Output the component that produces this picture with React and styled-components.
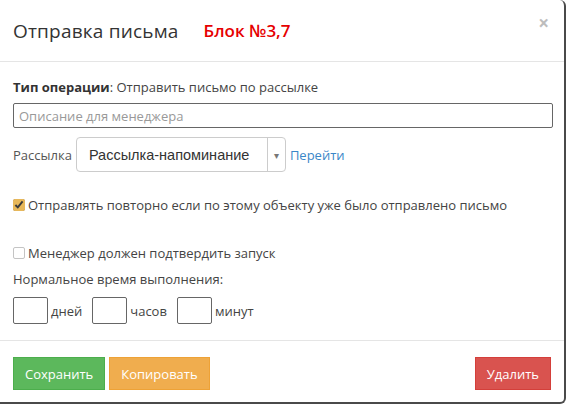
import React, { useState } from 'react'
import styled, { createGlobalStyle } from 'styled-components'

const Global = createGlobalStyle`
  body {
    margin: 0;
    background: #fff;
    font-family: "Open Sans", "Liberation Sans", sans-serif;
    color: #333;
  }
`

const App = () => {
  const [repeat, setRepeat] = useState(true)
  const [confirm, setConfirm] = useState(false)

  return (
    <>
      <Global />
      <Modal>
        <Header>
          <Title>Отправка письма</Title>
          <Block>Блок №3,7</Block>
          <Close>×</Close>
        </Header>
        <Body>
          <Line>
            <b>Тип операции</b>: Отправить письмо по рассылке
          </Line>
          <TextInput placeholder="Описание для менеджера" />
          <SelectRow>
            <span>Рассылка</span>
            <Select>
              <SelectValue>Рассылка-напоминание</SelectValue>
              <SelectArrow>▾</SelectArrow>
            </Select>
            <Link>Перейти</Link>
          </SelectRow>
          <Check top="24px">
            <input type="checkbox" checked={repeat} onChange={() => setRepeat(!repeat)} />
            Отправлять повторно если по этому объекту уже было отправлено письмо
          </Check>
          <Check top="30px">
            <input type="checkbox" checked={confirm} onChange={() => setConfirm(!confirm)} />
            Менеджер должен подтвердить запуск
          </Check>
          <Line top="8px">Нормальное время выполнения:</Line>
          <TimeRow>
            <TimeInput />
            <Unit>дней</Unit>
            <TimeInput />
            <Unit>часов</Unit>
            <TimeInput />
            <Unit>минут</Unit>
          </TimeRow>
        </Body>
        <Footer>
          <Button color="#5cb85c" border="#4cae4c">Сохранить</Button>
          <Button color="#f0ad4e" border="#eea236">Копировать</Button>
          <Spacer />
          <Button color="#d9534f" border="#d43f3a">Удалить</Button>
        </Footer>
      </Modal>
    </>
  )
}

export default App

const Modal = styled.div`
  width: 566px;
  height: 404px;
  box-sizing: border-box;
  background: #fff;
  border-right: 2px solid #4a4a4a;
  border-bottom: 2px solid #4a4a4a;
  border-radius: 0 6px 6px 0;
  display: flex;
  flex-direction: column;
`

const Header = styled.div`
  height: 62px;
  box-sizing: border-box;
  border-bottom: 1px solid #e5e5e5;
  display: flex;
  align-items: center;
  padding: 0 13px;
`

const Title = styled.div`
  font-size: 19px;
  color: #333;
  letter-spacing: 0.2px;
`

const Block = styled.div`
  margin-left: 25px;
  font-size: 17px;
  font-weight: 600;
  color: #e60000;
`

const Close = styled.div`
  margin-left: auto;
  margin-right: 2px;
  margin-top: -16px;
  font-size: 19px;
  color: #bdbdbd;
  font-weight: 700;
`

const Body = styled.div`
  flex: 1;
  padding: 16px 13px 0 13px;
  font-size: 13px;
  color: #444;
`

const Line = styled.div`
  margin-top: ${p => p.top || '0'};
  line-height: 18px;
  b {
    font-weight: 700;
    color: #333;
  }
`

const TextInput = styled.input`
  display: block;
  margin-top: 7px;
  width: 540px;
  height: 25px;
  box-sizing: border-box;
  border: 1px solid #666;
  border-radius: 2px;
  padding: 0 5px;
  font-family: inherit;
  font-size: 13px;
  &::placeholder {
    color: #999;
  }
`

const SelectRow = styled.div`
  display: flex;
  align-items: center;
  margin-top: 9px;
  color: #555;
`

const Select = styled.div`
  margin-left: 4px;
  width: 210px;
  height: 35px;
  box-sizing: border-box;
  border: 1px solid #ccc;
  border-radius: 4px;
  display: flex;
  align-items: center;
`

const SelectValue = styled.div`
  flex: 1;
  padding-left: 12px;
  font-family: "Liberation Sans", Arial, sans-serif;
  font-size: 14.5px;
  color: #333;
`

const SelectArrow = styled.div`
  width: 17px;
  height: 100%;
  border-left: 1px solid #ccc;
  display: flex;
  align-items: center;
  justify-content: center;
  font-size: 10px;
  color: #777;
`

const Link = styled.a`
  margin-left: 4px;
  color: #3a87c8;
  cursor: pointer;
`

const Check = styled.label`
  display: flex;
  align-items: center;
  margin-top: ${p => p.top};
  line-height: 18px;
  input {
    width: 12px;
    height: 12px;
    margin: 0 3px 0 0;
    accent-color: #e8b85a;
  }
  input:not(:checked) {
    appearance: none;
    box-sizing: border-box;
    border: 1px solid #c4c4c4;
    border-radius: 2px;
    background: #fff;
  }
`

const TimeRow = styled.div`
  display: flex;
  align-items: center;
  margin-top: 9px;
`

const TimeInput = styled.input`
  width: 35px;
  height: 27px;
  box-sizing: border-box;
  border: 1px solid #666;
  border-radius: 2px;
`

const Unit = styled.span`
  margin: 0 10px 0 3px;
  &:last-child {
    margin-right: 0;
  }
`

const Footer = styled.div`
  height: 62px;
  box-sizing: border-box;
  border-top: 1px solid #e5e5e5;
  display: flex;
  align-items: flex-start;
  gap: 4px;
  padding: 16px 13px 0 13px;
`

const Spacer = styled.div`
  flex: 1;
`

const Button = styled.button`
  height: 33px;
  padding: 0 11px;
  border: 1px solid ${p => p.border};
  background: ${p => p.color};
  color: #fff;
  font-family: inherit;
  font-size: 13px;
  border-radius: 0;
`
